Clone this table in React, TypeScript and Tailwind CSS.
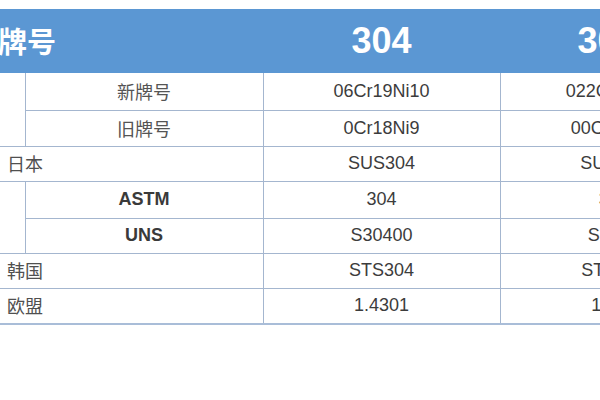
const rows: { label?: string; sub?: string; a: string; b: string; group?: 'start' | 'cont' }[] = [
  { sub: '新牌号', a: '06Cr19Ni10', b: '022Cr19Ni10', group: 'start' },
  { sub: '旧牌号', a: '0Cr18Ni9', b: '00Cr19Ni10', group: 'cont' },
  { label: '日本', a: 'SUS304', b: 'SUS304L' },
  { sub: 'ASTM', a: '304', b: '304L', group: 'start' },
  { sub: 'UNS', a: 'S30400', b: 'S30403', group: 'cont' },
  { label: '韩国', a: 'STS304', b: 'STS304L' },
  { label: '欧盟', a: '1.4301', b: '1.4306' },
]

const heights = ['h-[37px]', 'h-[36px]', 'h-[35px]', 'h-[37px]', 'h-[35px]', 'h-[35px]', 'h-[36px]']

const cjk = "font-['Noto_Sans_CJK_SC',sans-serif]"
const num = "font-['Liberation_Sans','Noto_Sans_CJK_SC',sans-serif]"

export default function App() {
  return (
    <div className="w-[600px] h-[400px] bg-white overflow-hidden pt-[9px]">
      <table className="table-fixed border-collapse w-[737px]">
        <colgroup>
          <col className="w-[25px]" />
          <col className="w-[238px]" />
          <col className="w-[237px]" />
          <col className="w-[237px]" />
        </colgroup>
        <thead>
          <tr className="h-[64px] bg-[#5b97d3] text-white">
            <th colSpan={2} className={`text-left font-bold text-[29px] pl-0 ${cjk}`}>
              <span className="-ml-[2px]">牌号</span>
            </th>
            <th className={`text-center font-bold text-[36px] ${num}`}>304</th>
            <th className={`text-center font-bold text-[36px] ${num}`}>304L</th>
          </tr>
        </thead>
        <tbody className="text-[#3c3c3c]">
          {rows.map((r, i) => {
            const last = i === rows.length - 1
            const bottom = last ? 'border-b-2 border-b-[#a9bdd8]' : 'border-b border-b-[#a4b6cf]'
            return (
              <tr key={i} className={heights[i]}>
                {r.group === 'start' && (
                  <td rowSpan={2} className="border-r border-r-[#a4b6cf] border-b border-b-[#a4b6cf]" />
                )}
                {r.label ? (
                  <td colSpan={2} className={`text-left pl-[7px] text-[18px] text-[#505050] ${cjk} ${bottom} border-r border-r-[#a4b6cf]`}>
                    {r.label}
                  </td>
                ) : (
                  <td className={`text-center text-[18px] ${/[A-Z]/.test(r.sub ?? '') ? `${num} font-bold text-[#3a3a3a]` : `${cjk} text-[#555]`} ${bottom} border-r border-r-[#a4b6cf]`}>
                    {r.sub}
                  </td>
                )}
                <td className={`text-center text-[18px] ${num} ${bottom} border-r border-r-[#a4b6cf]`}>{r.a}</td>
                <td className={`text-center text-[18px] ${num} ${bottom}`}>{r.b}</td>
              </tr>
            )
          })}
        </tbody>
      </table>
    </div>
  )
}
